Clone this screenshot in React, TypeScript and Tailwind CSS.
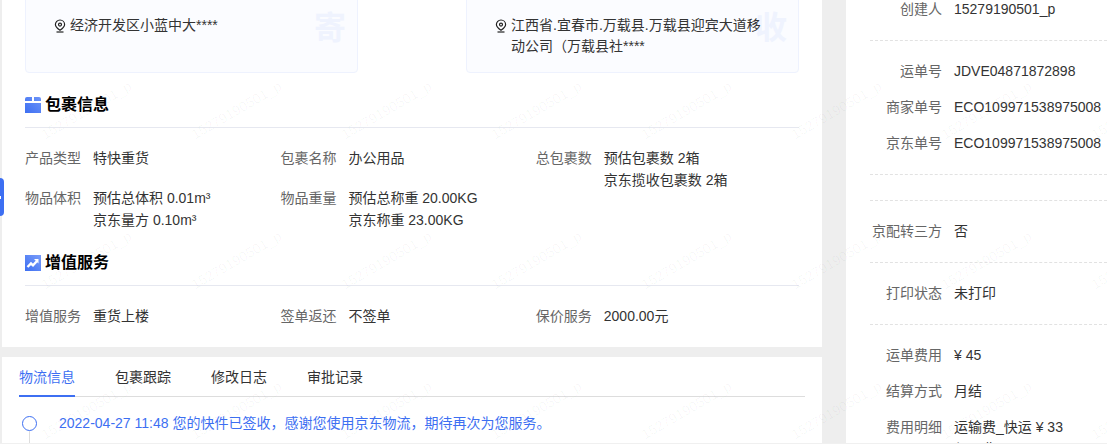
import { ReactNode } from "react";

const font = "font-['Liberation_Sans','Noto_Sans_CJK_SC',sans-serif]";

function Pin() {
  return (
    <svg width="12" height="14" viewBox="0 0 12 14" fill="none" stroke="#222" strokeWidth="1.2" className="shrink-0">
      <path d="M6 1a4.6 4.6 0 0 1 4.6 4.6c0 2.4-2.4 4.3-4.6 5.7C3.8 9.900 1.400 8 1.400 5.600A4.600 4.600 0 0 1 6 1z" />
      <circle cx="6" cy="5.600" r="1.500" />
      <path d="M2.500 13h7" />
    </svg>
  );
}

function BoxIcon() {
  return (
    <svg width="16" height="16" viewBox="0 0 16 16">
      <defs>
        <linearGradient id="box" x1="0" y1="1" x2="1" y2="0">
          <stop offset="0" stopColor="#3d6ff2" />
          <stop offset="1" stopColor="#6d94f8" />
        </linearGradient>
      </defs>
      <path d="M2 0h5v4H0V2a2 2 0 0 1 2-2zM9 0h5a2 2 0 0 1 2 2v2H9zM0 6h16v10H0z" fill="url(#box)" />
    </svg>
  );
}

function TrendIcon() {
  return (
    <svg width="16" height="16" viewBox="0 0 16 16">
      <defs>
        <linearGradient id="trend" x1="0" y1="1" x2="1" y2="0">
          <stop offset="0" stopColor="#3d6ff2" />
          <stop offset="1" stopColor="#7a9df9" />
        </linearGradient>
      </defs>
      <rect width="16" height="16" fill="url(#trend)" />
      <path d="M2.500 12l3.500-3.500 2 1.800 4-4.300" fill="none" stroke="#fff" strokeWidth="2.400" />
      <path d="M9 4h4.500v4.500z" fill="#fff" />
    </svg>
  );
}

function AddressCard({ mark, lines }: { mark: string; lines: string[] }) {
  return (
    <div className="relative h-[94px] w-[333px] rounded-[4px] border border-[#eef2fe] bg-[#fbfcff] pl-[28px] pr-[24px] pt-[35px]">
      <span className="absolute right-[11px] top-[30px] text-[32px] leading-[36px] font-bold text-[#eff3fe]">{mark}</span>
      <div className="relative flex gap-[4px] text-[14px] leading-[21px] text-[#333]">
        <span className="pt-[4px]"><Pin /></span>
        <div>
          {lines.map((l) => (
            <div key={l}>{l}</div>
          ))}
        </div>
      </div>
    </div>
  );
}

function SectionTitle({ icon, title }: { icon: ReactNode; title: string }) {
  return (
    <div className="flex h-[43px] items-start gap-[4px] border-b border-[#e6e8f0] pt-[9px]">
      <span className="mt-[3px]">{icon}</span>
      <span className="text-[16px] leading-[22px] font-bold text-black">{title}</span>
    </div>
  );
}

function Field({ label, values }: { label: string; values: string[] }) {
  return (
    <div className="flex gap-[12px] text-[14px] leading-[22px]">
      <span className="text-[#666]">{label}</span>
      <div className="text-[#333]">
        {values.map((v) => (
          <div key={v}>{v}</div>
        ))}
      </div>
    </div>
  );
}

function SideRow({ label, values }: { label: string; values: string[] }) {
  return (
    <div className="flex h-[36px] gap-[12px] text-[14px] leading-[36px]">
      <span className="w-[72px] shrink-0 text-right whitespace-nowrap text-[#666]">{label}</span>
      <div className="leading-[22px] pt-[7px] text-[#333]">
        {values.map((v) => (
          <div key={v}>{v}</div>
        ))}
      </div>
    </div>
  );
}

function SideGroup({ children }: { children?: ReactNode }) {
  return <div className="border-b border-dashed border-[#e2e2e2] pb-[13px] pt-3">{children}</div>;
}

const tabs = ["物流信息", "包裹跟踪", "修改日志", "审批记录"];

export default function App() {
  return (
    <div className={`${font} relative flex h-[444px] w-[1107px] overflow-hidden bg-[#eeeeee] pl-[2px]`}>
      {/* 左侧主内容 */}
      <div className="flex w-[820px] shrink-0 flex-col gap-[10px]">
        <div className="h-[347px] shrink-0 bg-white px-[23px]">
          <div className="-mt-[21px] flex justify-between">
            <AddressCard mark="寄" lines={["经济开发区小蓝中大****"]} />
            <AddressCard mark="收" lines={["江西省.宜春市.万载县.万载县迎宾大道移", "动公司（万载县社****"]} />
          </div>
          <div className="mt-[12px]">
            <SectionTitle icon={<BoxIcon />} title="包裹信息" />
          </div>
          <div className="grid grid-cols-[255.4px_255.4px_1fr] auto-rows-[40px] pt-[19px]">
            <Field label="产品类型" values={["特快重货"]} />
            <Field label="包裹名称" values={["办公用品"]} />
            <Field label="总包裹数" values={["预估包裹数 2箱", "京东揽收包裹数 2箱"]} />
            <Field label="物品体积" values={["预估总体积 0.01m³", "京东量方 0.10m³"]} />
            <Field label="物品重量" values={["预估总称重 20.00KG", "京东称重 23.00KG"]} />
          </div>
          <div className="mt-[16px]">
            <SectionTitle icon={<TrendIcon />} title="增值服务" />
          </div>
          <div className="grid grid-cols-[255.4px_255.4px_1fr] pt-[19px]">
            <Field label="增值服务" values={["重货上楼"]} />
            <Field label="签单返还" values={["不签单"]} />
            <Field label="保价服务" values={["2000.00元"]} />
          </div>
        </div>

        <div className="min-h-0 flex-1 bg-white pl-[17px] pr-[17px]">
          <div className="flex h-[40px] gap-[40px] border-b border-[#dddddd] pt-[9px]">
            {tabs.map((t, i) => (
              <div
                key={t}
                className={
                  i === 0
                    ? "h-[31px] border-b-2 border-[#3d6ff2] text-[14px] leading-[22px] text-[#3d6ff2]"
                    : "text-[14px] leading-[22px] text-[#333]"
                }
              >
                {t}
              </div>
            ))}
          </div>
          <div className="flex gap-[22px] pl-[3px] pt-[19px]">
            <div className="flex flex-col items-center">
              <span className="h-[15px] w-[15px] rounded-full border border-[#3d6ff2]" />
              <span className="h-[20px] w-px bg-[#dddddd]" />
            </div>
            <div className="text-[14px] leading-[15px] whitespace-nowrap text-[#3d6ff2]">
              2022-04-27 11:48 您的快件已签收，感谢您使用京东物流，期待再次为您服务。
            </div>
          </div>
        </div>
      </div>

      {/* 右侧信息栏 */}
      <div className="ml-[24px] flex-1 bg-white pl-[24px]">
        <div className="-mt-[21px]">
          <SideGroup>
            <SideRow label="创建人" values={["15279190501_p"]} />
          </SideGroup>
          <SideGroup>
            <SideRow label="运单号" values={["JDVE04871872898"]} />
            <SideRow label="商家单号" values={["ECO109971538975008"]} />
            <SideRow label="京东单号" values={["ECO109971538975008"]} />
          </SideGroup>
          <SideGroup />
          <SideGroup>
            <SideRow label="京配转三方" values={["否"]} />
          </SideGroup>
          <SideGroup>
            <SideRow label="打印状态" values={["未打印"]} />
          </SideGroup>
          <div className="pt-3">
            <SideRow label="运单费用" values={["¥ 45"]} />
            <SideRow label="结算方式" values={["月结"]} />
            <SideRow label="费用明细" values={["运输费_快运 ¥ 33", "保价费 ¥ 12"]} />
          </div>
        </div>
      </div>

      {/* 侧边收起按钮 */}
      <div className="absolute left-0 top-[178px] flex h-[38px] w-[4px] items-center rounded-r-[6px] bg-[#3d6ff2]">
        <span className="h-[3px] w-px bg-white" />
      </div>

      {/* 底部分隔线 */}
      <div className="absolute inset-x-0 bottom-0 h-px bg-[#f0f0f0]" />

      {/* 水印 */}
      <div className="pointer-events-none absolute -left-[138px] -top-[115px] grid grid-cols-[repeat(9,150px)] auto-rows-[150px]">
        {Array.from({ length: 36 }).map((_, i) => (
          <div key={i} className="flex items-center justify-center">
            <span className="-rotate-[30deg] text-[14px] whitespace-nowrap text-black/[0.035]">15279190501_p</span>
          </div>
        ))}
      </div>
    </div>
  );
}
